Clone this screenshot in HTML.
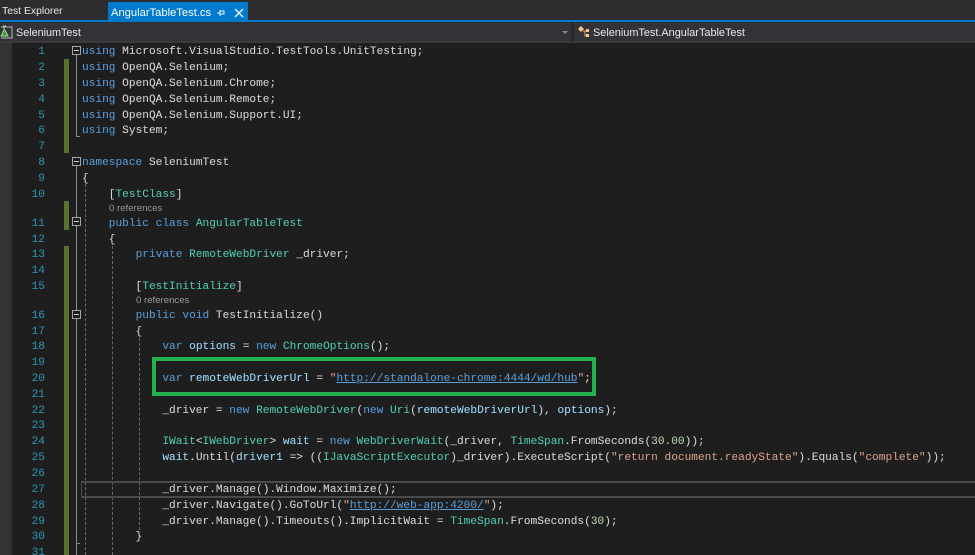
<!DOCTYPE html>
<html><head><meta charset="utf-8"><style>
html,body{margin:0;padding:0;background:#1e1e1e}
#r{position:relative;width:975px;height:555px;overflow:hidden;background:#1e1e1e;font-family:"Liberation Mono",monospace;font-size:11.17px;color:#d4d4d4;filter:blur(.35px)}
.a{position:absolute}
.c,.n{position:absolute;height:16px;line-height:16px;white-space:pre;margin-top:2px;-webkit-text-stroke:.06px currentColor}
.c{left:82px}
.n{left:20px;width:25px;text-align:right;color:#2b91af}
.u{font-family:"Liberation Sans",sans-serif;position:absolute;white-space:nowrap}
.l{position:absolute;font-family:"Liberation Sans",sans-serif;font-size:9.6px;color:#999;height:12px;line-height:12px;white-space:pre}
.k{color:#569cd6}.t{color:#4ec9b0}.s{color:#d69d85}.v{color:#9cdcfe}
.h{color:#569cd6;text-decoration:underline}
.d{position:absolute;width:0;border-left:1px dashed #6a6a6a}
.b{position:absolute;left:72px;width:7px;height:7px;border:1px solid #a5a5a5;background:#1e1e1e}
.b:after{content:"";position:absolute;left:1px;top:3px;width:5px;height:1px;background:#c8c8c8}
.g{position:absolute;left:64px;width:5px;background:#55732c}
</style></head><body><div id="r">
<div class="a" style="left:0;top:0;width:975px;height:21px;background:#2d2d30"></div>
<div class="u" style="left:2px;top:4px;font-size:10.4px;color:#e8e8e8;line-height:16px">Test Explorer</div>
<div class="a" style="left:108px;top:2px;width:140px;height:19px;background:#007acc"></div>
<div class="u" style="left:111px;top:5px;font-size:11.2px;color:#fff;line-height:16px">AngularTableTest.cs</div>
<svg class="a" style="left:216px;top:7px" width="10" height="11" viewBox="0 0 10 11"><path d="M1 6H4M4 3V9M4 4H8V7H4" fill="none" stroke="#dff" stroke-width="1"/></svg>
<svg class="a" style="left:234px;top:8px" width="10" height="10" viewBox="0 0 10 10"><path d="M1 1L9 9M9 1L1 9" fill="none" stroke="#e6f3fb" stroke-width="1.5"/></svg>
<div class="a" style="left:0;top:20px;width:975px;height:2px;background:#007acc"></div>
<div class="a" style="left:0;top:22px;width:975px;height:21px;background:#333337"></div>
<div class="a" style="left:0;top:41px;width:975px;height:2px;background:#3a3a3e"></div>
<div class="a" style="left:571px;top:22px;width:3px;height:20px;background:#2a2a2c"></div>
<svg class="a" style="left:0;top:24px" width="14" height="16" viewBox="0 0 14 16"><path d="M1 3H12V14H1" fill="none" stroke="#bbb"/><path d="M3 2H6M4 3V6L1 12H8L5 6" fill="#3f9a3a" stroke="#a6d89c"/></svg>
<div class="u" style="left:16px;top:25px;font-size:10.8px;color:#e8e8e8;line-height:16px">SeleniumTest</div>
<svg class="a" style="left:562px;top:31px" width="7" height="4" viewBox="0 0 7 4"><path d="M0 0H6L3 3Z" fill="#8a8a8a"/></svg>
<svg class="a" style="left:577px;top:25px" width="14" height="14" viewBox="0 0 14 14"><path d="M1 4L4 1L7 4L4 7Z" fill="#f0c68a"/><path d="M6 6H11M8 6V11H11" fill="none" stroke="#d9a864"/><path d="M9 4H12V7H9ZM9 9H12V12H9Z" fill="#f0c68a"/></svg>
<div class="u" style="left:593px;top:25px;font-size:10.9px;color:#e8e8e8;line-height:16px">SeleniumTest.AngularTableTest</div>
<div class="a" style="left:0;top:43px;width:12px;height:512px;background:#333333"></div>

<div class="g" style="top:59px;height:94px"></div>
<div class="g" style="top:201px;height:29px"></div>
<div class="g" style="top:246px;height:309px"></div>

<div class="a" style="left:76px;top:55px;width:1px;height:81px;background:#8a8a8a"></div>
<div class="a" style="left:76px;top:136px;width:4px;height:1px;background:#8a8a8a"></div>
<div class="a" style="left:76px;top:166px;width:1px;height:389px;background:#8a8a8a"></div>
<div class="a" style="left:76px;top:543px;width:4px;height:1px;background:#8a8a8a"></div>
<div class="d" style="left:85px;top:184px;height:371px"></div>
<div class="d" style="left:112px;top:246px;height:309px"></div>
<div class="d" style="left:139px;top:338px;height:192px"></div>
<div class="b" style="top:46px"></div>
<div class="b" style="top:157px"></div>
<div class="b" style="top:217px"></div>
<div class="b" style="top:310px"></div>

<div class="a" style="left:81px;top:481px;width:900px;height:13px;border:1px solid #4a4a4a;border-width:2px 0 2px 1px"></div>
<div class="a" style="left:152px;top:357px;width:436px;height:31px;border:4px solid #22b14c"></div>

<div class="n" style="top:42px">1</div><div class="c" style="top:42px"><span class="k">using</span> Microsoft.VisualStudio.TestTools.UnitTesting;</div>
<div class="n" style="top:58px">2</div><div class="c" style="top:58px"><span class="k">using</span> OpenQA.Selenium;</div>
<div class="n" style="top:74px">3</div><div class="c" style="top:74px"><span class="k">using</span> OpenQA.Selenium.Chrome;</div>
<div class="n" style="top:90px">4</div><div class="c" style="top:90px"><span class="k">using</span> OpenQA.Selenium.Remote;</div>
<div class="n" style="top:106px">5</div><div class="c" style="top:106px"><span class="k">using</span> OpenQA.Selenium.Support.UI;</div>
<div class="n" style="top:121px">6</div><div class="c" style="top:121px"><span class="k">using</span> System;</div>
<div class="n" style="top:137px">7</div>
<div class="n" style="top:153px">8</div><div class="c" style="top:153px"><span class="k">namespace</span> SeleniumTest</div>
<div class="n" style="top:169px">9</div><div class="c" style="top:169px">{</div>
<div class="n" style="top:185px">10</div><div class="c" style="top:185px">    [<span class="t">TestClass</span>]</div>
<div class="l" style="left:109px;top:203px">0 references</div>
<div class="n" style="top:214px">11</div><div class="c" style="top:214px">    <span class="k">public class</span> <span class="t">AngularTableTest</span></div>
<div class="n" style="top:230px">12</div><div class="c" style="top:230px">    {</div>
<div class="n" style="top:245px">13</div><div class="c" style="top:245px">        <span class="k">private</span> <span class="t">RemoteWebDriver</span> _driver;</div>
<div class="n" style="top:261px">14</div>
<div class="n" style="top:277px">15</div><div class="c" style="top:277px">        [<span class="t">TestInitialize</span>]</div>
<div class="l" style="left:136px;top:295px">0 references</div>
<div class="n" style="top:306px">16</div><div class="c" style="top:306px">        <span class="k">public void</span> TestInitialize()</div>
<div class="n" style="top:322px">17</div><div class="c" style="top:322px">        {</div>
<div class="n" style="top:337px">18</div><div class="c" style="top:337px">            <span class="k">var</span> <span class="v">options</span> = <span class="k">new</span> <span class="t">ChromeOptions</span>();</div>
<div class="n" style="top:353px">19</div>
<div class="n" style="top:369px">20</div><div class="c" style="top:369px">            <span class="k">var</span> <span class="v">remoteWebDriverUrl</span> = <span class="s">"</span><span class="h">http://standalone-chrome:4444/wd/hub</span><span class="s">"</span>;</div>
<div class="n" style="top:385px">21</div>
<div class="n" style="top:401px">22</div><div class="c" style="top:401px">            _driver = <span class="k">new</span> <span class="t">RemoteWebDriver</span>(<span class="k">new</span> <span class="t">Uri</span>(<span class="v">remoteWebDriverUrl</span>), <span class="v">options</span>);</div>
<div class="n" style="top:416px">23</div>
<div class="n" style="top:432px">24</div><div class="c" style="top:432px">            <span class="t">IWait</span>&lt;<span class="t">IWebDriver</span>&gt; <span class="v">wait</span> = <span class="k">new</span> <span class="t">WebDriverWait</span>(_driver, <span class="t">TimeSpan</span>.FromSeconds(<span style="color:#b5cea8">30.00</span>));</div>
<div class="n" style="top:448px">25</div><div class="c" style="top:448px">            <span class="v">wait</span>.Until(<span class="v">driver1</span> =&gt; ((<span class="t">IJavaScriptExecutor</span>)_driver).ExecuteScript(<span class="s">"return document.readyState"</span>).Equals(<span class="s">"complete"</span>));</div>
<div class="n" style="top:464px">26</div>
<div class="n" style="top:480px">27</div><div class="c" style="top:480px">            _driver.Manage().Window.Maximize();</div>
<div class="n" style="top:496px">28</div><div class="c" style="top:496px">            _driver.Navigate().GoToUrl(<span class="s">"</span><span class="h">http://web-app:4200/</span><span class="s">"</span>);</div>
<div class="n" style="top:512px">29</div><div class="c" style="top:512px">            _driver.Manage().Timeouts().ImplicitWait = <span class="t">TimeSpan</span>.FromSeconds(<span style="color:#b5cea8">30</span>);</div>
<div class="n" style="top:527px">30</div><div class="c" style="top:527px">        }</div>
<div class="n" style="top:543px">31</div>
</div></body></html>
